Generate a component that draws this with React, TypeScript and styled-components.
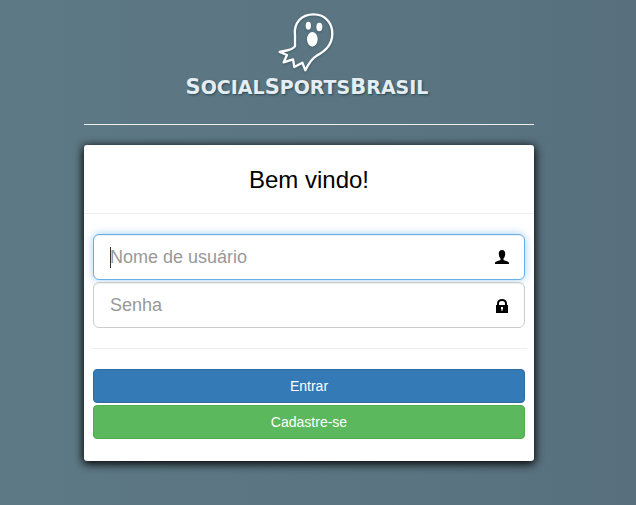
import React from "react";
import styled, { createGlobalStyle } from "styled-components";

const GlobalStyle = createGlobalStyle`
  *, *::before, *::after { box-sizing: border-box; }
  html, body, #root { min-height: 100vh; }
  body {
    margin: 0;
    font-family: "Liberation Sans", Arial, sans-serif;
    font-size: 14px;
    line-height: 20px;
    color: #000;
    background: linear-gradient(90deg, #5d7985 0%, #5a7581 60%, #58707e 100%);
  }
`;

const Page = styled.main`
  min-height: 100vh;
  padding: 12px 18px 44px 0;
`;

const Column = styled.div`
  width: 100%;
  max-width: 450px;
  margin: 0 auto;
`;

const Brand = styled.header`
  display: flex;
  flex-direction: column;
  align-items: center;
  height: 113px;
  padding-right: 4px;
  margin-bottom: 20px;
  border-bottom: 1px solid #eee;
`;

const Ghost = styled.svg`
  display: block;
  width: 58px;
  height: 62px;
  filter: drop-shadow(0 1px 1px rgba(20, 50, 65, 0.4));
`;

const BrandName = styled.h1`
  margin: 0;
  font-family: "DejaVu Sans", sans-serif;
  font-size: 19px;
  font-weight: 700;
  line-height: 26px;
  color: #e4edf1;
  text-transform: uppercase;
  text-shadow: 1px 1px 2px rgba(20, 50, 65, 0.7);
`;

const Initial = styled.span`
  font-size: 21px;
`;

const Card = styled.section`
  background: #fff;
  border-radius: 3px;
  box-shadow: 0 2px 10px 1px #000;
`;

const CardTitle = styled.h2`
  margin: 0;
  padding: 20px 0 18px;
  border-bottom: 1px solid #eee;
  font-size: 24px;
  font-weight: 400;
  line-height: 30px;
  text-align: center;
`;

const Form = styled.form`
  display: flex;
  flex-direction: column;
  gap: 2px;
  padding: 20px 9px 22px;
`;

const Field = styled.label`
  position: relative;
  display: block;
`;

const Caret = styled.span`
  position: absolute;
  top: 13px;
  left: 17px;
  display: none;
  width: 1px;
  height: 21px;
  background: #333;
  pointer-events: none;
`;

const Input = styled.input`
  display: block;
  width: 100%;
  height: 46px;
  padding: 10px 42px 10px 16px;
  border: 1px solid #ccc;
  border-radius: 6px;
  background: #fff;
  box-shadow: inset 0 1px 1px rgba(0, 0, 0, 0.075);
  font-family: inherit;
  font-size: 18px;
  line-height: 24px;
  color: #555;
  outline: 0;
  &::placeholder { color: #999; opacity: 1; }
  &:focus {
    border-color: #66afe9;
    box-shadow: inset 0 1px 1px rgba(0, 0, 0, 0.075), 0 0 8px rgba(102, 175, 233, 0.6);
  }
  &:focus:placeholder-shown { caret-color: transparent; }
  &:focus:placeholder-shown ~ ${Caret} { display: block; }
`;

const FieldIcon = styled.svg`
  position: absolute;
  top: 16px;
  right: 16px;
  width: 14px;
  height: 15px;
  pointer-events: none;
`;

const Divider = styled.hr`
  width: calc(100% + 4px);
  margin: 18px -2px;
  border: 0;
  border-top: 1px solid #eee;
`;

const Button = styled.button<{ $fill: string; $edge: string }>`
  height: 34px;
  padding: 6px 12px;
  border: 1px solid ${(p) => p.$edge};
  border-radius: 4px;
  background: ${(p) => p.$fill};
  color: #fff;
  font-family: inherit;
  font-size: 14px;
  line-height: 20px;
  cursor: pointer;
`;

export default function App() {
  return (
    <>
      <GlobalStyle />
      <Page>
        <Column>
          <Brand>
            <Ghost viewBox="54 36 174 186" aria-hidden="true">
              <path
                d="M105 107C100 69 124 43 161 43C196 43 218 70 217 103C216 138 192 156 170 167C153 177 144 194 136 211L127 188L103 201L99 178L71 187L81 165L59 156C79 151 96 151 105 139Z"
                fill="none"
                stroke="#fff"
                strokeWidth="7"
                strokeLinejoin="round"
              />
              <ellipse cx="145" cy="77" rx="8" ry="12" fill="#fff" />
              <ellipse cx="178" cy="81" rx="9" ry="13" fill="#fff" />
              <ellipse cx="157" cy="118" rx="16" ry="22" fill="#fff" />
            </Ghost>
            <BrandName>
              <Initial>S</Initial>ocial<Initial>S</Initial>ports<Initial>B</Initial>rasil
            </BrandName>
          </Brand>
          <Card>
            <CardTitle>Bem vindo!</CardTitle>
            <Form onSubmit={(e: React.FormEvent) => e.preventDefault()}>
              <Field>
                <Input type="text" aria-label="Nome de usuário" placeholder="Nome de usuário" autoFocus />
                <Caret />
                <FieldIcon viewBox="0 0 14 15" aria-hidden="true">
                  <path d="M7 0C9.300 0 10.500 1.600 10.200 4.300C10 6.500 9.300 7.700 8.500 8.600V10C9.500 10.800 13.700 11 14 13V14H0V13C.3 11 4.500 10.800 5.500 10V8.600C4.700 7.700 4 6.500 3.800 4.300C3.500 1.600 4.700 0 7 0Z" />
                </FieldIcon>
              </Field>
              <Field>
                <Input type="password" aria-label="Senha" placeholder="Senha" />
                <Caret />
                <FieldIcon viewBox="0 0 14 15" aria-hidden="true">
                  <path
                    fillRule="evenodd"
                    d="M1 7H2V5.500C2 2.700 4 1 7 1S12 2.700 12 5.500V7H13V15H1ZM4 7H10V5.500C10 3.800 8.800 3 7 3S4 3.800 4 5.500ZM6 9V11L6.500 11.500V13H7.500V11.500L8 11V9Z"
                  />
                </FieldIcon>
              </Field>
              <Divider />
              <Button type="submit" $fill="#337ab7" $edge="#2e6da4">Entrar</Button>
              <Button type="button" $fill="#5cb85c" $edge="#4cae4c">Cadastre-se</Button>
            </Form>
          </Card>
        </Column>
      </Page>
    </>
  );
}
